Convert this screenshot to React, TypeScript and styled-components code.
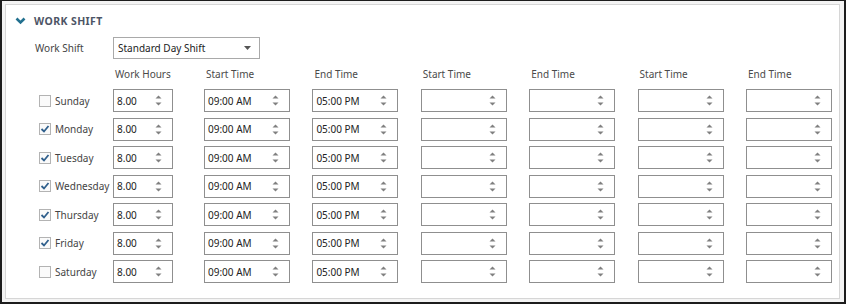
import React from "react";
import styled, { createGlobalStyle } from "styled-components";

const GlobalStyle = createGlobalStyle`
  html, body {
    margin: 0;
    padding: 0;
    background: #ffffff;
  }
  body {
    font-family: "Noto Sans", "Open Sans", sans-serif;
  }
`;

type Day = { name: string; checked: boolean };

const days: Day[] = [
  { name: "Sunday", checked: false },
  { name: "Monday", checked: true },
  { name: "Tuesday", checked: true },
  { name: "Wednesday", checked: true },
  { name: "Thursday", checked: true },
  { name: "Friday", checked: true },
  { name: "Saturday", checked: false },
];

const timeHeaders = [
  "Start Time",
  "End Time",
  "Start Time",
  "End Time",
  "Start Time",
  "End Time",
];

const Spinner = () => (
  <SpinIcon width="7" height="11" viewBox="0 0 7 11">
    <polygon points="0.5,3.5 3.5,0.5 6.5,3.5" fill="#808080" />
    <polygon points="0.5,7.5 3.5,10.5 6.5,7.5" fill="#808080" />
  </SpinIcon>
);

const NumberBox = ({ value, width }: { value?: string; width: number }) => (
  <InputBox $width={width}>
    <InputText>{value}</InputText>
    <Spinner />
  </InputBox>
);

const CheckBox = ({ checked }: { checked: boolean }) => (
  <Check>
    {checked && (
      <svg width="10" height="10" viewBox="0 0 10 10">
        <polyline
          points="1.5,5 4,7.5 8.5,2"
          fill="none"
          stroke="#2f5f8c"
          strokeWidth="1.8"
        />
      </svg>
    )}
  </Check>
);

const App = () => {
  return (
    <>
      <GlobalStyle />
      <Frame>
        <Panel>
          <Title>
            <svg width="11" height="8" viewBox="0 0 11 8">
              <polyline
                points="1.5,1.5 5.5,5.5 9.5,1.5"
                fill="none"
                stroke="#22708f"
                strokeWidth="2.6"
              />
            </svg>
            <TitleText>WORK SHIFT</TitleText>
          </Title>

          <ShiftRow>
            <ShiftLabel>Work Shift</ShiftLabel>
            <Select>
              <span>Standard Day Shift</span>
              <svg width="7" height="4" viewBox="0 0 7 4">
                <polygon points="0,0 7,0 3.5,4" fill="#555" />
              </svg>
            </Select>
          </ShiftRow>

          <HeaderRow>
            <LabelCell />
            <HoursCell>
              <ColHead>Work Hours</ColHead>
            </HoursCell>
            <TimeGroup>
              {timeHeaders.map((h, i) => (
                <TimeCell key={i}>
                  <ColHead>{h}</ColHead>
                </TimeCell>
              ))}
            </TimeGroup>
          </HeaderRow>

          <Rows>
            {days.map((d) => (
              <DayRow key={d.name}>
                <LabelCell>
                  <CheckBox checked={d.checked} />
                  <DayName>{d.name}</DayName>
                </LabelCell>
                <HoursCell>
                  <NumberBox value="8.00" width={60} />
                </HoursCell>
                <TimeGroup>
                  <NumberBox value="09:00 AM" width={86} />
                  <NumberBox value="05:00 PM" width={86} />
                  <NumberBox width={86} />
                  <NumberBox width={86} />
                  <NumberBox width={86} />
                  <NumberBox width={86} />
                </TimeGroup>
              </DayRow>
            ))}
          </Rows>
        </Panel>
      </Frame>
    </>
  );
};

export default App;

const Frame = styled.div`
  width: 846px;
  height: 304px;
  box-sizing: border-box;
  border: 2px solid #1c1c1c;
  border-top-width: 1px;
  background: #f3f3f3;
  padding: 3px 4px 3px 3px;
`;

const Panel = styled.div`
  height: 100%;
  box-sizing: border-box;
  background: #ffffff;
  border: 1px solid #d6d6d6;
  padding: 9px 0 0 32px;
  color: #3c3c3c;
  font-size: 10px;
`;

const Title = styled.div`
  display: flex;
  align-items: center;
  height: 14px;
  margin-left: -23px;
  gap: 8px;
`;

const TitleText = styled.span`
  font-weight: 700;
  font-size: 10.5px;
  color: #4d5566;
  letter-spacing: 0.4px;
`;

const ShiftRow = styled.div`
  display: flex;
  align-items: center;
  margin-top: 9px;
  height: 22px;
`;

const ShiftLabel = styled.span`
  width: 78px;
  margin-left: -3px;
  color: #444;
`;

const Select = styled.div`
  width: 147px;
  height: 22px;
  box-sizing: border-box;
  border: 1px solid #a9a9a9;
  display: flex;
  align-items: center;
  justify-content: space-between;
  padding: 0 8px 0 4px;
  color: #222;

  svg {
    display: block;
  }
`;

const HeaderRow = styled.div`
  display: flex;
  align-items: center;
  height: 16px;
  margin-top: 7px;
`;

const Rows = styled.div`
  display: flex;
  flex-direction: column;
  gap: 5.5px;
  margin-top: 7px;
`;

const DayRow = styled.div`
  display: flex;
  align-items: center;
  height: 23px;
`;

const LabelCell = styled.div`
  width: 75px;
  display: flex;
  align-items: center;
  gap: 4px;
`;

const HoursCell = styled.div`
  width: 91px;
`;

const TimeGroup = styled.div`
  display: flex;
  gap: 22.4px;
`;

const TimeCell = styled.div`
  width: 86px;
`;

const ColHead = styled.span`
  padding-left: 2px;
  color: #4a4a4a;
`;

const DayName = styled.span`
  color: #444;
`;

const Check = styled.span`
  width: 12px;
  height: 12px;
  margin-left: 1px;
  box-sizing: border-box;
  border: 1px solid #b3b3b3;
  background: #fafafa;
  display: flex;
  align-items: center;
  justify-content: center;
`;

const InputBox = styled.div<{ $width: number }>`
  width: ${(p) => p.$width}px;
  height: 23px;
  box-sizing: border-box;
  border: 1px solid #8f8f8f;
  background: #fff;
  display: flex;
  align-items: center;
  justify-content: space-between;
  padding: 0 10px 0 3px;
`;

const InputText = styled.span`
  color: #222;
`;

const SpinIcon = styled.svg`
  display: block;
`;
